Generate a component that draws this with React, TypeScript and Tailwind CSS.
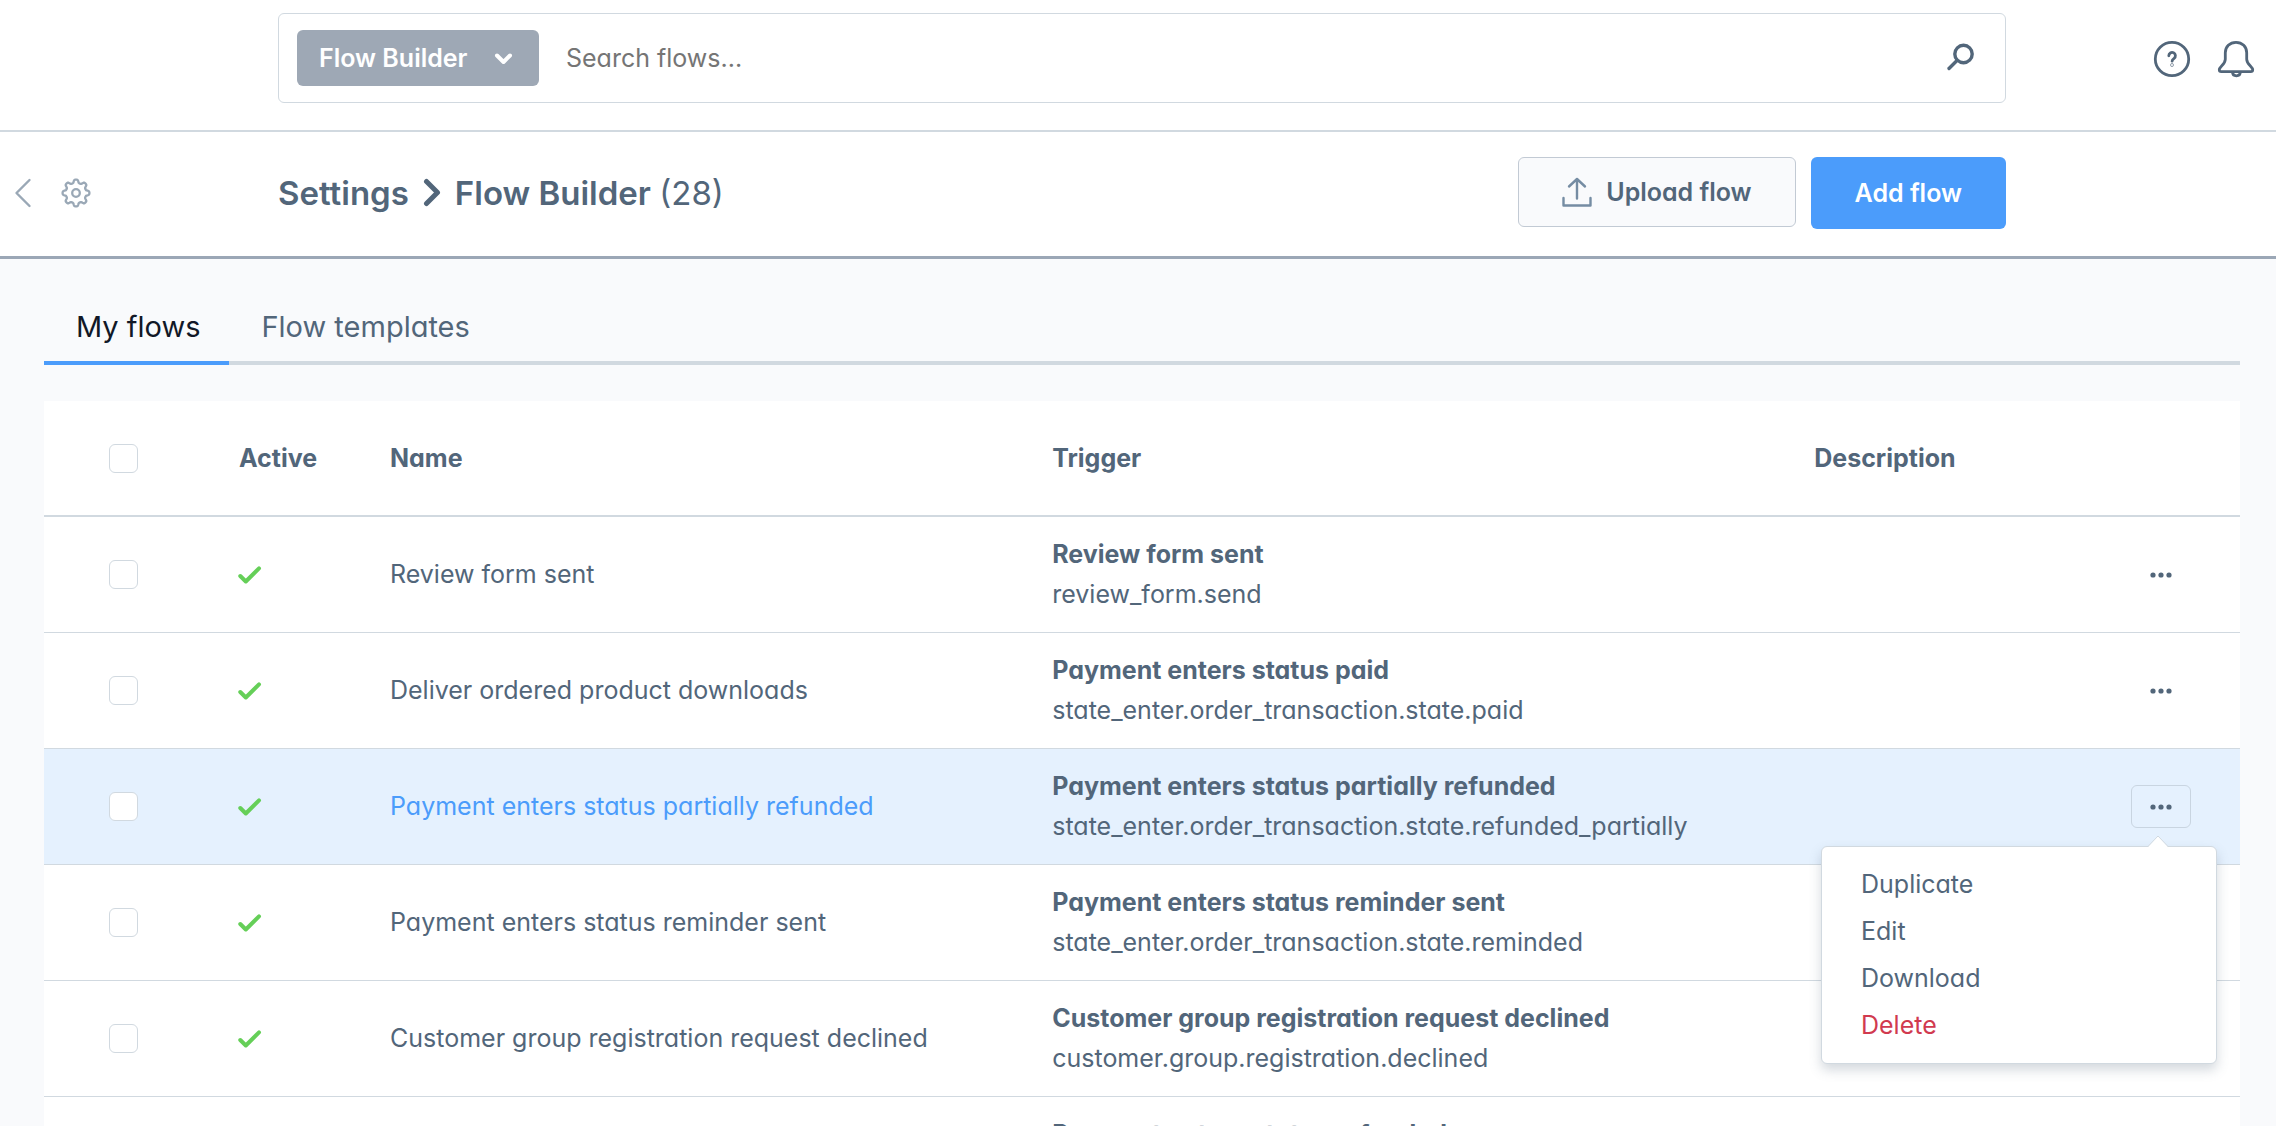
import React from "react";

type Flow = { name: string; trigger: string; event: string; open?: boolean };

const flows: Flow[] = [
  { name: "Review form sent", trigger: "Review form sent", event: "review_form.send" },
  { name: "Deliver ordered product downloads", trigger: "Payment enters status paid", event: "state_enter.order_transaction.state.paid" },
  { name: "Payment enters status partially refunded", trigger: "Payment enters status partially refunded", event: "state_enter.order_transaction.state.refunded_partially", open: true },
  { name: "Payment enters status reminder sent", trigger: "Payment enters status reminder sent", event: "state_enter.order_transaction.state.reminded" },
  { name: "Customer group registration request declined", trigger: "Customer group registration request declined", event: "customer.group.registration.declined" },
  { name: "Payment enters status refunded", trigger: "Payment enters status refunded", event: "state_enter.order_transaction.state.refunded" },
];

// Outline of an eight-toothed cog with rounded teeth, centred on (15, 15).
const cogPoints = Array.from({ length: 160 }, (_, i) => {
  const angle = (i / 160) * Math.PI * 2;
  const radius = 11.8 + 1.7 * Math.tanh(1.8 * Math.cos(8 * angle));
  return `${(15 + radius * Math.cos(angle)).toFixed(2)},${(15 + radius * Math.sin(angle)).toFixed(2)}`;
}).join(" ");

function Checkbox({ label }: { label: string }) {
  return (
    <input
      type="checkbox"
      aria-label={label}
      className="block size-[29px] appearance-none rounded-md border border-[#d1d9e0] bg-white checked:bg-[#4b9cfb]"
    />
  );
}

function ContextMenu() {
  return (
    <div className="absolute top-[61px] -right-[26px] z-10 w-[396px] rounded-md border border-[#d1d9e0] bg-white pt-[13px] pb-[15px] text-left shadow-[0_6px_12px_rgba(82,102,122,0.25)]">
      <svg className="absolute -top-[12px] right-[47px]" width="22" height="13" viewBox="0 0 22 13" aria-hidden="true">
        <path d="M0 13 11 1l11 12z" fill="#fff" />
        <path d="M0.5 12 11 1l10.5 11" fill="none" stroke="#d1d9e0" />
      </svg>
      <ul>
        {["Duplicate", "Edit", "Download"].map((item) => (
          <li key={item}>
            <button type="button" className="block h-[47px] w-full px-[39px] text-left">{item}</button>
          </li>
        ))}
        <li>
          <button type="button" className="block h-[47px] w-full px-[39px] text-left text-[#d13a4f]">Delete</button>
        </li>
      </ul>
    </div>
  );
}

export default function App() {
  return (
    <div className="h-screen overflow-hidden bg-[#f9fafc] font-[Inter,sans-serif] text-[25px] leading-10 text-[#52667a] antialiased [font-feature-settings:'cv11']">
      <header className="grid h-[132px] grid-cols-[278px_1fr_270px] border-b-2 border-[#d1d9e0] bg-white">
        <form className="col-start-2 mt-[13px] flex h-[90px] items-center rounded-md border border-[#d1d9e0] pl-[18px] pr-[30px]">
          <button type="button" className="flex h-14 w-[242px] items-center justify-between rounded-md bg-[#9ea8b5] pl-[22px] pr-[26px] font-semibold text-white">
            Flow Builder
            <svg width="19" height="14" viewBox="0 0 19 14" fill="none" stroke="currentColor" strokeWidth="4" strokeLinecap="round" strokeLinejoin="round" aria-hidden="true"><path d="m3 4.500 6.500 6.500 6.500-6.500" /></svg>
          </button>
          <input type="search" aria-label="Search flows" placeholder="Search flows..." className="ml-[27px] min-w-0 flex-1 outline-none placeholder:text-[#757575]" />
          <button type="button" aria-label="Search">
            <svg width="30" height="30" viewBox="0 0 30 30" fill="none" stroke="currentColor" strokeWidth="3.400" strokeLinecap="round" aria-hidden="true"><circle cx="18.500" cy="11" r="8.700" /><path d="M12 17.500 4 25.500" /></svg>
          </button>
        </form>
        <div className="mt-[14px] flex h-[90px] items-center justify-end gap-[26px] pr-[21px]">
          <button type="button" aria-label="Help">
            <svg width="38" height="38" viewBox="0 0 38 38" fill="none" stroke="currentColor" strokeWidth="2.800" strokeLinecap="round" strokeLinejoin="round" aria-hidden="true"><circle cx="19" cy="19" r="16.700" /><path d="M15.800 15.800a3.300 3.300 0 1 1 5.300 2.600c-1.200.9-2 1.400-2 2.800" /><circle cx="19" cy="25" r="0.300" /></svg>
          </button>
          <button type="button" aria-label="Notifications">
            <svg width="38" height="38" viewBox="0 0 38 38" fill="none" stroke="currentColor" strokeWidth="2.800" strokeLinejoin="round" aria-hidden="true"><path d="M19 2.300c-6.300 0-10.700 4.500-10.700 10.500v6.400c0 3-1.300 4.400-3.700 6.800-1.500 1.500-2.300 2.400-2.300 3.800s.8 1.900 2 1.900h29.400c1.200 0 2-.5 2-1.900s-.8-2.300-2.300-3.800c-2.400-2.400-3.700-3.800-3.700-6.800v-6.400c0-6-4.400-10.500-10.700-10.500z" /><path d="M15.500 32c0 2.400 1.600 3.800 3.900 3.800s3.900-1.400 3.900-3.800" /></svg>
          </button>
        </div>
      </header>

      <section className="grid h-[127px] grid-cols-[278px_1fr_270px] items-center border-b-3 border-[#9ba7b6] bg-white pb-0.5">
        <div className="flex items-center gap-[29px] pl-[14px]">
          <button type="button" aria-label="Back" className="text-[#9aa8b6]">
            <svg width="18" height="30" viewBox="0 0 18 30" fill="none" stroke="currentColor" strokeWidth="2.400" strokeLinecap="round" strokeLinejoin="round" aria-hidden="true"><path d="M15.500 2 2.500 15l13 13" /></svg>
          </button>
          <svg className="text-[#9aa8b6]" width="30" height="30" viewBox="0 0 30 30" fill="none" stroke="currentColor" strokeWidth="2.300" strokeLinejoin="round" aria-hidden="true"><polygon points={cogPoints} /><circle cx="15" cy="15" r="3.800" /></svg>
        </div>
        <h1 className="col-start-2 row-start-1 flex items-center gap-3.5 justify-self-start whitespace-nowrap text-[33px] font-semibold">
          <a href="#settings">Settings</a>
          <svg width="18" height="30" viewBox="0 0 18 30" fill="none" stroke="currentColor" strokeWidth="5" strokeLinecap="round" strokeLinejoin="round" aria-hidden="true"><path d="M3.500 3.500 14.500 14.500l-11 11" /></svg>
          <span>Flow Builder <span className="font-normal">(28)</span></span>
        </h1>
        <div className="col-start-2 row-start-1 flex gap-[15px] justify-self-end font-semibold">
          <button type="button" className="flex h-[70px] items-center gap-[14px] rounded-md border border-[#c2cad4] bg-[#f9fafc] px-[43px]">
            <svg className="text-[#758ca3]" width="30" height="30" viewBox="0 0 30 30" fill="none" stroke="currentColor" strokeWidth="2.400" strokeLinecap="round" strokeLinejoin="round" aria-hidden="true"><path d="M15 21.500V2M7 9.500l8-7.500 8 7.500M1.500 21v7.500h27V21" /></svg>
            Upload flow
          </button>
          <button type="button" className="h-[72px] rounded-md bg-[#4b9cfb] px-11 text-white">Add flow</button>
        </div>
      </section>

      <main className="px-11 pr-9 pt-[43px]">
        <nav className="flex border-b-4 border-[#d1d9e0] text-[29px]">
          <a href="#flows" className="-mb-1 h-[63px] border-b-4 border-[#4b9cfb] pl-8 pr-[29px] leading-[50px] text-[#111827]">My flows</a>
          <a href="#templates" className="h-[59px] px-8 leading-[50px]">Flow templates</a>
        </nav>

        <table className="mt-9 w-full table-fixed border-separate border-spacing-0 bg-white">
          <colgroup>
            <col className="w-[159px]" />
            <col className="w-[151px]" />
            <col className="w-[30.200%]" />
            <col className="w-[34.700%]" />
            <col />
            <col className="w-[109px]" />
          </colgroup>
          <thead>
            <tr className="h-[116px] text-left *:border-b-2 *:border-[#d1d9e0] *:font-bold">
              <th className="pl-[65px]"><Checkbox label="Select all flows" /></th>
              <th className="pl-9">Active</th>
              <th className="pl-9">Name</th>
              <th className="pl-[35px]">Trigger</th>
              <th className="pl-[35px]">Description</th>
              <th aria-label="Actions" />
            </tr>
          </thead>
          <tbody>
            {flows.map((flow) => (
              <tr key={flow.name} className={flow.open ? "bg-[#e5f1fe] *:border-b *:border-[#d1d9e0]" : "*:border-b *:border-[#d1d9e0]"}>
                <td className="pl-[65px]"><Checkbox label={`Select ${flow.name}`} /></td>
                <td className="pl-[35px]">
                  <svg width="24" height="18" viewBox="0 0 24 18" fill="none" stroke="#65cf58" strokeWidth="4" strokeLinecap="round" strokeLinejoin="round" role="img" aria-label="Active"><path d="m2.300 10 5.500 5.500L21 2.300" /></svg>
                </td>
                <td className="pl-9 pb-0.5"><a href="#flow" className={flow.open ? "text-[#4b9cfb]" : ""}>{flow.name}</a></td>
                <td className="h-[116px] whitespace-nowrap pb-0.5 pl-[35px]">
                  <strong className="block font-bold">{flow.trigger}</strong>
                  <span className="block">{flow.event}</span>
                </td>
                <td />
                <td>
                  <div className="relative w-[60px]">
                    <button type="button" aria-label={`Actions for ${flow.name}`} className={flow.open ? "flex h-[43px] w-[60px] items-center justify-center rounded-md border border-[#c9d5e1]" : "flex h-[43px] w-[60px] items-center justify-center"}>
                      <svg width="22" height="6" viewBox="0 0 22 6" fill="currentColor" aria-hidden="true"><circle cx="3" cy="3" r="2.600" /><circle cx="11" cy="3" r="2.600" /><circle cx="19" cy="3" r="2.600" /></svg>
                    </button>
                    {flow.open && <ContextMenu />}
                  </div>
                </td>
              </tr>
            ))}
          </tbody>
        </table>
      </main>
    </div>
  );
}
